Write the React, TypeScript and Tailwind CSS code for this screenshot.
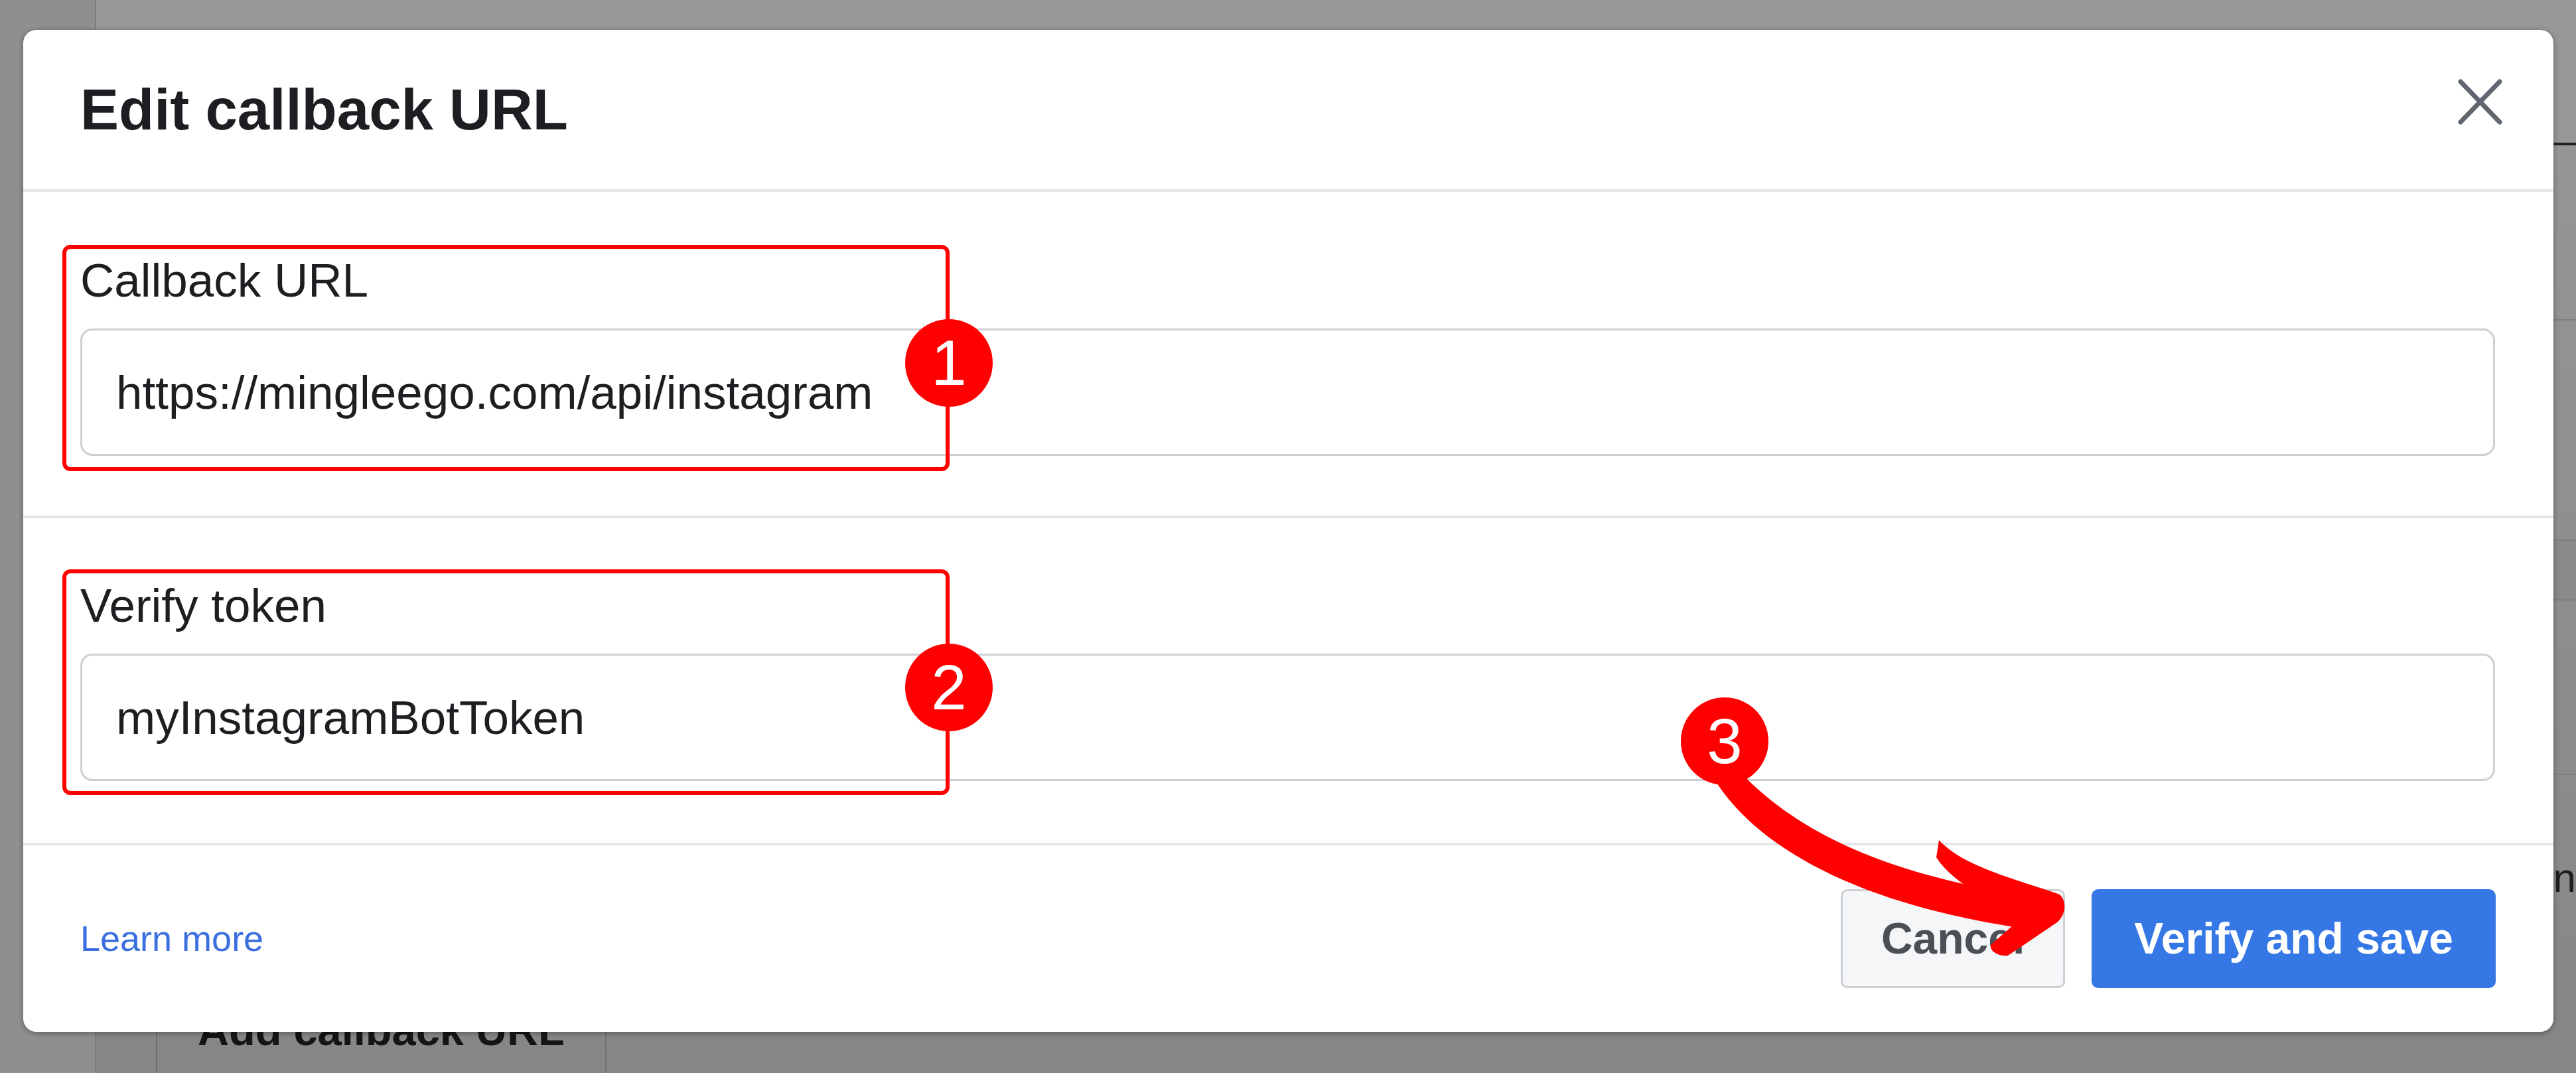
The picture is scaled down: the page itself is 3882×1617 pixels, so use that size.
import React from 'react';

const font = { fontFamily: '"Liberation Sans", Arial, sans-serif' };

const CloseIcon = () => (
    <svg width="67" height="69" viewBox="0 0 67 69" fill="none">
        <path d="M4 4L63 65M63 4L4 65" stroke="#606770" strokeWidth="7" strokeLinecap="round" />
    </svg>
);

const Field = ({ label, value, last }: { label: string; value: string; last?: boolean }) => (
    <div className={`flex flex-col border-b-4 border-[#e4e6eb] pl-[86px] pr-[88px] ${last ? 'pt-[90px] pb-[93px]' : 'pt-[92px] pb-[90px]'}`}>
        <label className="text-[71px] leading-[84px] text-[#1c1e21]">{label}</label>
        <input
            readOnly
            defaultValue={value}
            className="mt-[30px] h-[192px] w-full rounded-[18px] border-[3px] border-[#ccd0d5] bg-white pl-[51px] text-[71px] text-[#1c1e21] outline-none"
        />
    </div>
);

const Badge = ({ n, className }: { n: string; className: string }) => (
    <div className={`absolute flex h-[132px] w-[132px] items-center justify-center rounded-full bg-[#ff0000] text-[96px] leading-none text-white ${className}`}>
        {n}
    </div>
);

export default function App() {
    return (
        <div className="relative h-[1617px] w-[3882px] overflow-hidden bg-gradient-to-b from-[#989898] to-[#868686]" style={font}>
            {/* page behind the modal */}
            <div className="flex h-full">
                <aside className="w-[145px] shrink-0 border-r-2 border-[#7c7c7c] bg-[#8f8f8f]" />
                <main className="flex flex-1 flex-col">
                    <div className="h-[219px] border-b-4 border-[#1f1f1f] bg-[#979797]" />
                    <div className="h-[264px] border-b-2 border-[#7f7f7f]" />
                    <div className="h-[330px]" />
                    <div className="h-[92px] border-y-2 border-[#7f7f7f] bg-[#8a8a8a]" />
                    <div className="h-[263px] border-b-2 border-[#7f7f7f]" />
                    <div className="flex justify-end pt-[108px] text-[62px] text-[#1c1e21]">Subscription</div>
                    <div className="mt-auto mb-[-11px] pl-[90px]">
                        <div className="inline-flex h-[150px] items-center border-2 border-[#707070] px-[61px] text-[65px] font-bold text-[#151515]">
                            Add callback URL
                        </div>
                    </div>
                </main>
            </div>

            {/* modal */}
            <div className="absolute left-[35px] top-[45px] flex w-[3813px] flex-col rounded-[20px] bg-white shadow-[0_2px_8px_rgba(0,0,0,0.35)]">
                <div className="flex h-[244px] items-center justify-between border-b-4 border-[#e4e6eb] pl-[86px] pr-[77px]">
                    <h1 className="text-[87px] font-bold leading-[104px] text-[#1c1e21]">Edit callback URL</h1>
                    <button className="-translate-y-[12px]">
                        <CloseIcon />
                    </button>
                </div>

                <Field label="Callback URL" value="https://mingleego.com/api/instagram" />
                <Field label="Verify token" value="myInstagramBotToken" last />

                <div className="flex h-[281px] items-center justify-between pl-[86px] pr-[87px]">
                    <a href="#" className="text-[54px] text-[#3b6fdf]">Learn more</a>
                    <div className="flex gap-[40px]">
                        <button className="h-[149px] rounded-[10px] border-[3px] border-[#ccd0d5] bg-[#f5f6f7] px-[58px] text-[66px] font-bold text-[#4b4f56]">
                            Cancel
                        </button>
                        <button className="h-[149px] rounded-[10px] border-[3px] border-[#3578e5] bg-[#3578e5] px-[61px] text-[66px] font-bold text-white">
                            Verify and save
                        </button>
                    </div>
                </div>
            </div>

            {/* annotations */}
            <div className="absolute left-[94px] top-[369px] h-[341px] w-[1337px] rounded-[12px] border-[6px] border-[#ff0000]" />
            <div className="absolute left-[94px] top-[858px] h-[340px] w-[1337px] rounded-[12px] border-[6px] border-[#ff0000]" />

            <svg className="pointer-events-none absolute left-0 top-0" width="3882" height="1617" viewBox="0 0 3882 1617">
                <path
                    d="M2578 1165 C2630 1258 2770 1362 3070 1402 L3060 1350 C2830 1318 2700 1245 2624 1165 Z"
                    fill="#ff0000"
                />
                <path
                    d="M2922 1266 C2960 1308 3050 1328 3104 1348 C3116 1360 3112 1380 3100 1390 L3026 1440 C3014 1442 2998 1434 3000 1424 L3050 1380 C3015 1365 2945 1335 2918 1292 Z"
                    fill="#ff0000"
                />
            </svg>

            <Badge n="1" className="left-[1364px] top-[481px]" />
            <Badge n="2" className="left-[1364px] top-[970px]" />
            <Badge n="3" className="left-[2533px] top-[1051px]" />
        </div>
    );
}
